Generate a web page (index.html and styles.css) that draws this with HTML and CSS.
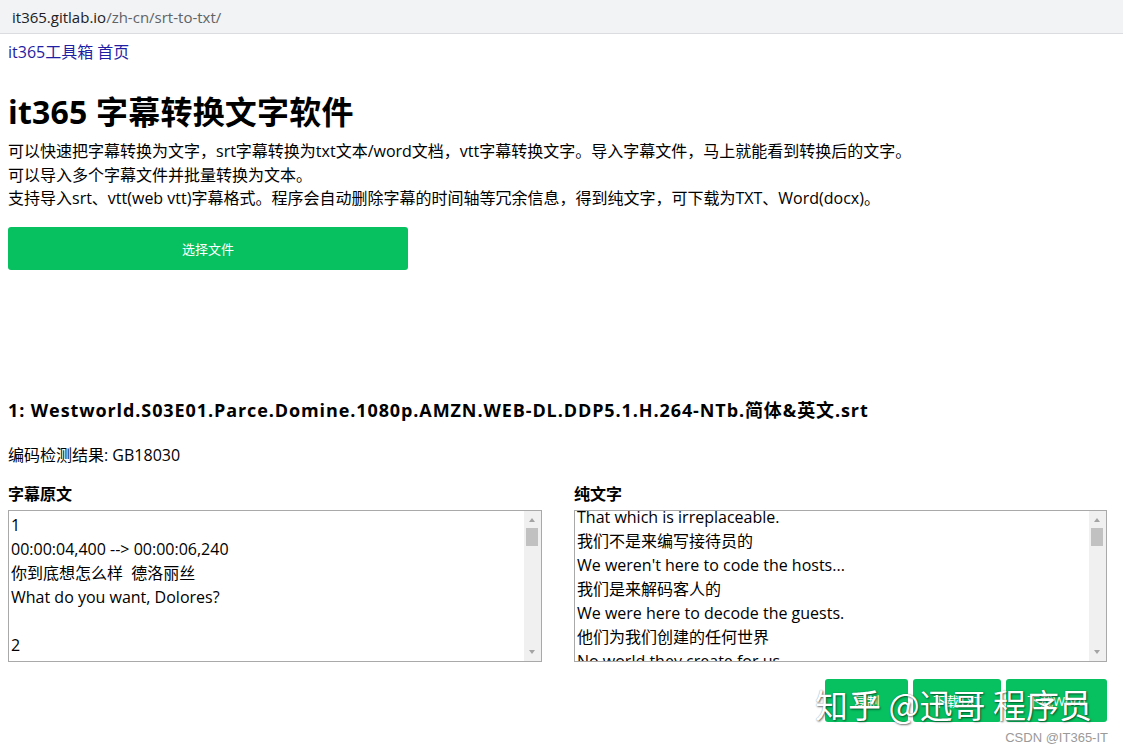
FILE: index.html
```html
<!DOCTYPE html>
<html lang="zh-CN">
<head>
<meta charset="utf-8">
<title>it365 字幕转换文字软件</title>
<link rel="stylesheet" href="styles.css">
</head>
<body>
<div class="urlbar"><span class="host">it365.gitlab.io</span><span class="path">/zh-cn/srt-to-txt/</span></div>
<main class="page">
  <nav class="toplink"><a href="#">it365工具箱 首页</a></nav>
  <h1 class="title">it365 字幕转换文字软件</h1>
  <p class="intro">可以快速把字幕转换为文字，srt字幕转换为txt文本/word文档，vtt字幕转换文字。导入字幕文件，马上就能看到转换后的文字。<br>可以导入多个字幕文件并批量转换为文本。<br>支持导入srt、vtt(web vtt)字幕格式。程序会自动删除字幕的时间轴等冗余信息，得到纯文字，可下载为TXT、Word(docx)。</p>
  <button class="pick">选择文件</button>

  <h3 class="file">1: Westworld.S03E01.Parce.Domine.1080p.AMZN.WEB-DL.DDP5.1.H.264-NTb.简体&amp;英文.srt</h3>
  <p class="enc">编码检测结果: GB18030</p>

  <div class="cols">
    <section class="col">
      <div class="label">字幕原文</div>
      <div class="ta-wrap">
        <textarea class="ta" spellcheck="false">1
00:00:04,400 --> 00:00:06,240
你到底想怎么样  德洛丽丝
What do you want, Dolores?

2
00:00:07,120 --> 00:00:09,600
我想要的东西
I want something

3
00:00:10,200 --> 00:00:12,480
不可替代的东西
That which is irreplaceable.

4
00:00:13,560 --> 00:00:15,720
我们不是来编写接待员的
We weren't here to code the hosts...

5
00:00:16,320 --> 00:00:18,400
我们是来解码客人的
We were here to decode the guests.</textarea>
        <div class="sb"><span class="arrow up"></span><span class="thumb"></span><span class="arrow down"></span></div>
      </div>
    </section>
    <section class="col">
      <div class="label">纯文字</div>
      <div class="ta-wrap">
        <textarea class="ta plain" spellcheck="false">我想要的东西
I want something
That which is irreplaceable.
我们不是来编写接待员的
We weren't here to code the hosts...
我们是来解码客人的
We were here to decode the guests.
他们为我们创建的任何世界
No world they create for us...
都无法满足他们的欲望
could ever satisfy their desires.
你们不过是镜子
You were only a mirror.</textarea>
        <div class="sb"><span class="arrow up"></span><span class="thumb"></span><span class="arrow down"></span></div>
      </div>
    </section>
  </div>

  <div class="actions">
    <button class="act act-copy">复制</button>
    <button class="act act-txt">下载TXT</button>
    <button class="act act-word">下载Word</button>
  </div>
</main>
<div class="watermark">知乎 @迅哥 程序员</div>
<div class="csdn">CSDN @IT365-IT</div>
<script src="script.js"></script>
</body>
</html>
```

FILE: styles.css
```css
html, body {
  margin: 0;
  padding: 0;
  background: #fff;
}
body {
  position: relative;
  width: 1123px;
  height: 753px;
  overflow: hidden;
  font-family: "Open Sans", "Noto Sans CJK SC", sans-serif;
  color: #000;
}
.urlbar {
  height: 34px;
  background: #f1f3f4;
  border-bottom: 1px solid #dadce0;
  box-sizing: border-box;
  padding-left: 12px;
  font-size: 15px;
  line-height: 34px;
}
.urlbar .host { color: #202124; }
.urlbar .path { color: #5f6368; }
.page {
  padding: 0 8px;
}
.toplink {
  margin-top: 6px;
  font-size: 16px;
  line-height: 24px;
}
.toplink a {
  color: #1f1fa3;
  text-decoration: none;
}
.title {
  margin: 28px 0 0;
  font-size: 32px;
  line-height: 40px;
  font-weight: 700;
  letter-spacing: 0.2px;
}
.intro {
  margin: 8px 0 0;
  font-size: 16px;
  line-height: 23.5px;
}
.pick {
  display: block;
  margin-top: 16px;
  width: 400px;
  height: 43px;
  border: 0;
  border-radius: 3px;
  background: #07c160;
  color: #fff;
  font-family: inherit;
  font-size: 13px;
}
.file {
  margin: 127px 0 0;
  font-size: 18px;
  line-height: 26px;
  font-weight: 700;
  letter-spacing: 0.9px;
}
.enc {
  margin: 20px 0 0;
  font-size: 16px;
  line-height: 24px;
}
.cols {
  margin-top: 15px;
  display: grid;
  grid-template-columns: 534px 533px;
  column-gap: 32px;
}
.label {
  font-size: 16px;
  line-height: 24px;
  font-weight: 700;
  margin-bottom: 4px;
}
.ta-wrap {
  position: relative;
  height: 152px;
}
.ta {
  display: block;
  box-sizing: border-box;
  width: 100%;
  height: 152px;
  margin: 0;
  border: 1px solid #a9a9a9;
  padding: 2px 19px 0 2px;
  font-family: inherit;
  font-size: 16px;
  line-height: 24px;
  color: #000;
  resize: none;
  overflow-y: scroll;
  scrollbar-width: none;
  white-space: pre-wrap;
}
.ta::-webkit-scrollbar { display: none; }
.sb {
  position: absolute;
  top: 1px;
  right: 1px;
  bottom: 1px;
  width: 17px;
  background: #f0f0f0;
}
.arrow {
  position: absolute;
  left: 5px;
  width: 0;
  height: 0;
  border-left: 3.5px solid transparent;
  border-right: 3.5px solid transparent;
}
.arrow.up {
  top: 7px;
  border-bottom: 4px solid #a3a3a3;
}
.arrow.down {
  bottom: 7px;
  border-top: 4px solid #a3a3a3;
}
.thumb {
  position: absolute;
  top: 17px;
  left: 2px;
  width: 12px;
  height: 18px;
  background: #c1c1c1;
}
.actions {
  margin-top: 17px;
  display: flex;
  justify-content: flex-end;
  gap: 5px;
  padding-right: 8px;
}
.act {
  height: 43px;
  border: 0;
  border-radius: 3px;
  background: #07c160;
  color: #fff;
  font-family: inherit;
  font-size: 13px;
  padding: 0;
}
.act-copy { width: 83px; }
.act-txt { width: 88px; }
.act-word { width: 101px; }
.watermark {
  position: absolute;
  left: 815px;
  top: 684px;
  font-size: 33px;
  line-height: 40px;
  color: #fff;
  white-space: pre;
  font-family: "Noto Sans CJK SC", sans-serif;
  text-shadow: 1px 1px 2px rgba(0,0,0,0.55), 0 0 1px rgba(0,0,0,0.4);
}
.csdn {
  position: absolute;
  right: 15px;
  top: 730px;
  font-size: 13px;
  line-height: 16px;
  color: #9a9a9a;
  font-family: "Liberation Sans", sans-serif;
}
```

FILE: script.js
```js
document.querySelector('.plain').scrollTop = 56;
```
